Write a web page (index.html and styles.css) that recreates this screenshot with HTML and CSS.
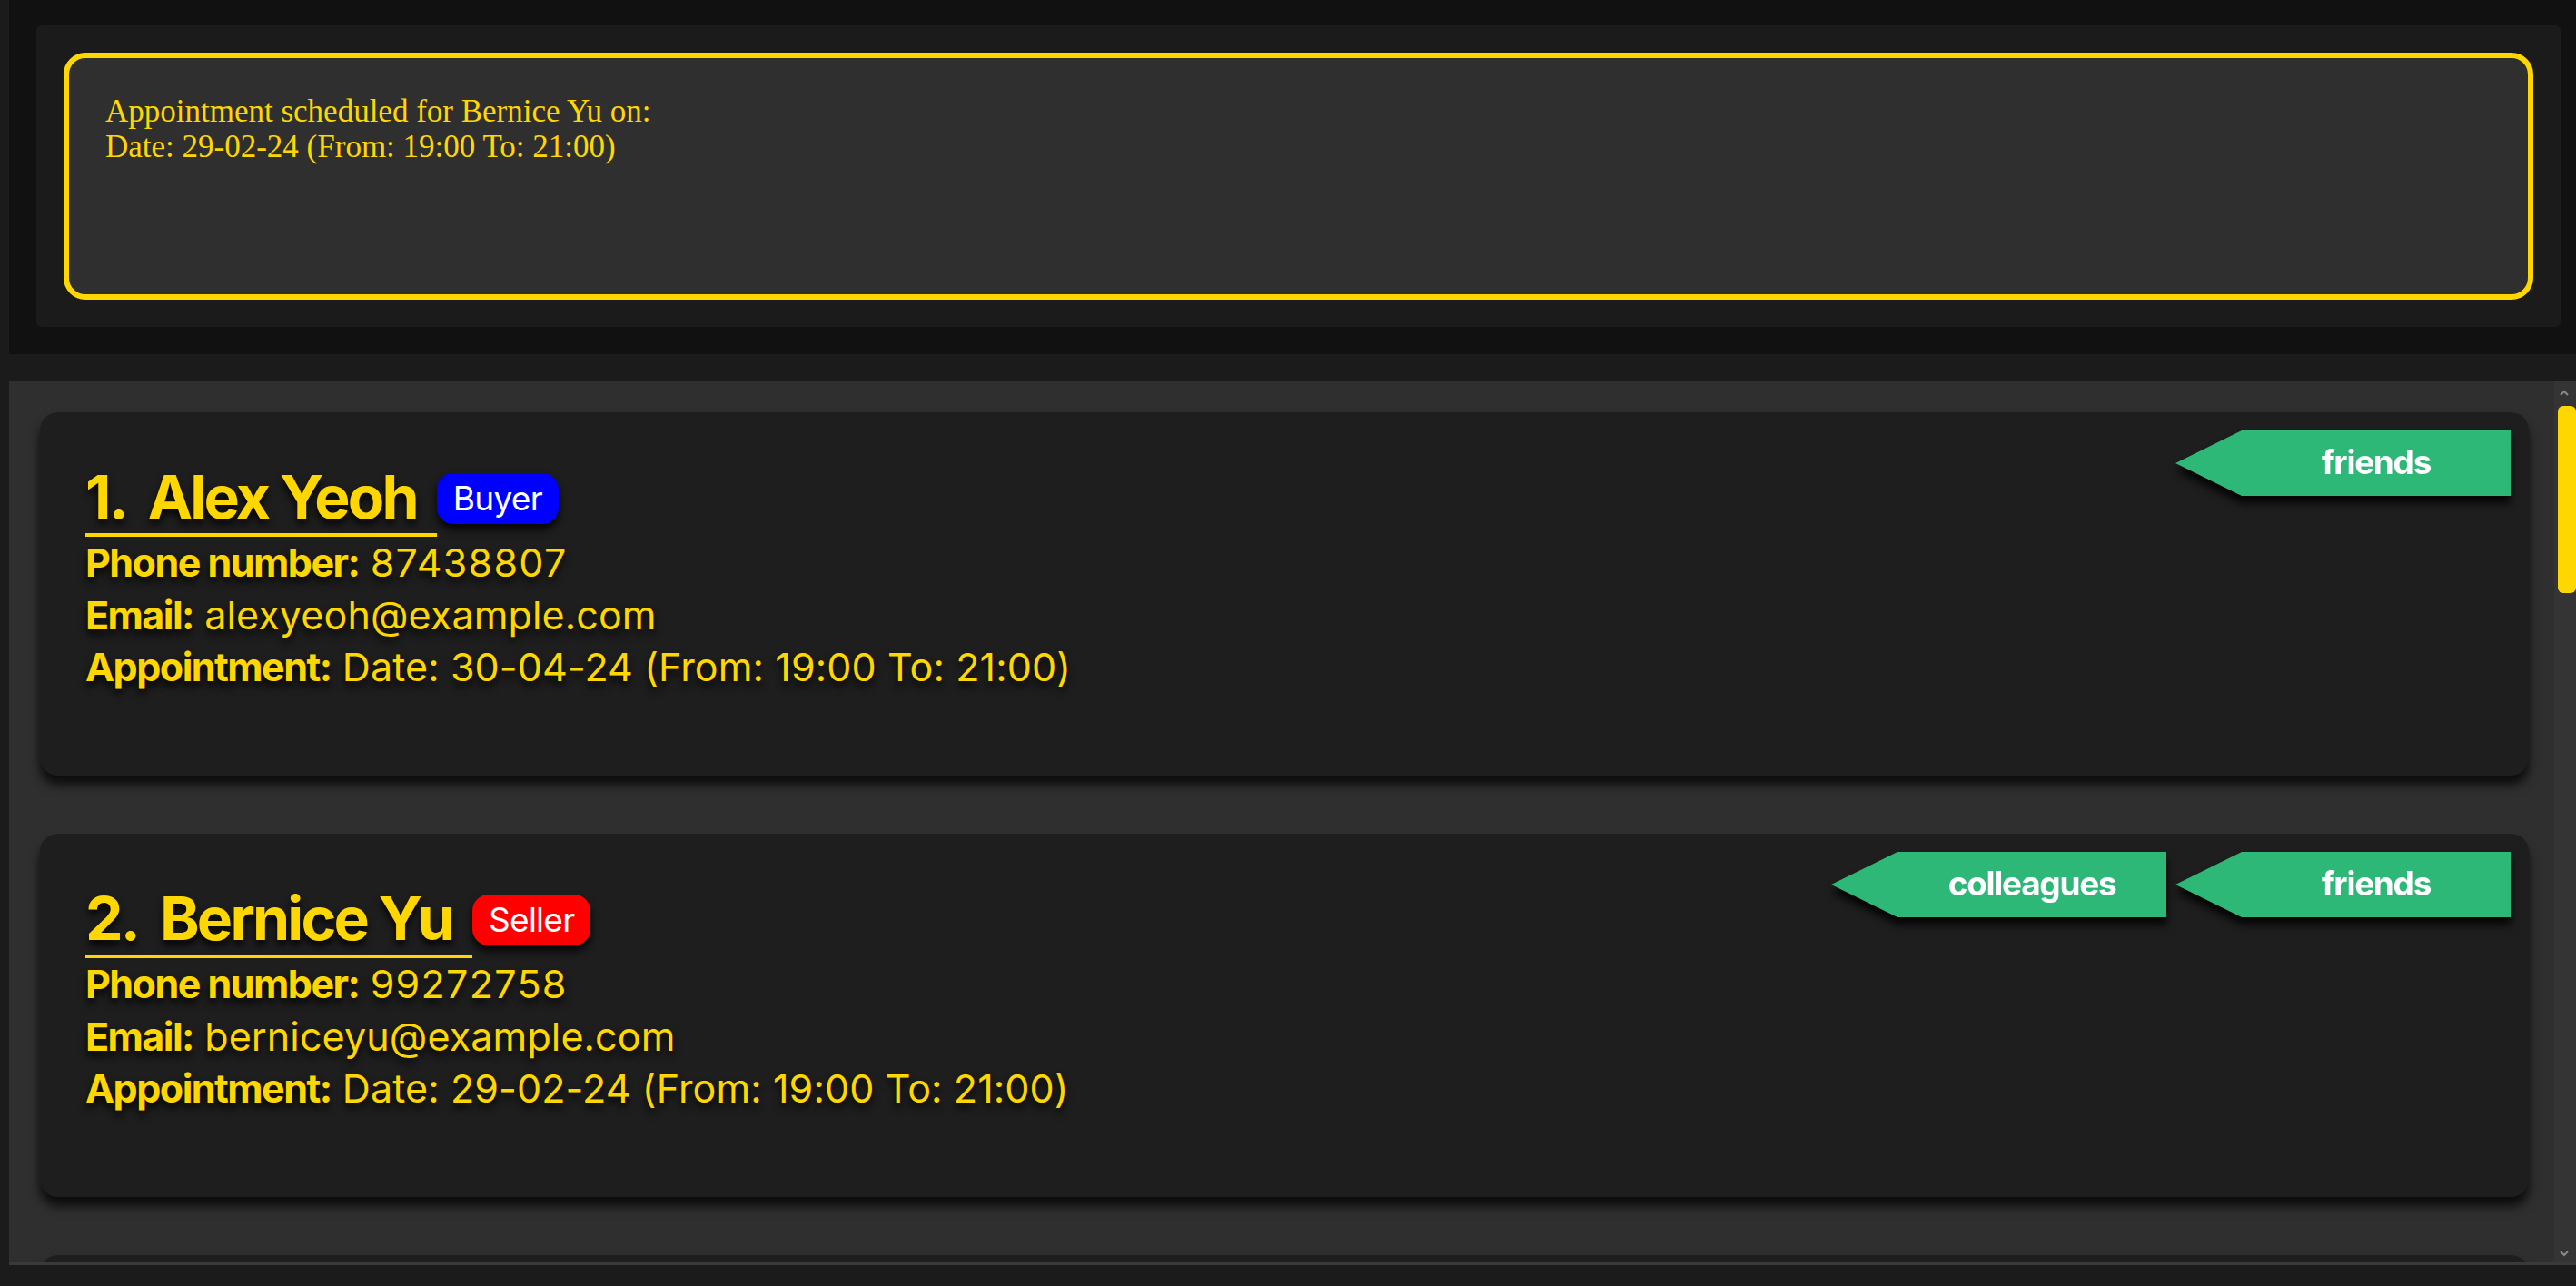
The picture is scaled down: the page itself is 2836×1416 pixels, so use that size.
FILE: index.html
```html
<!DOCTYPE html>
<html lang="en">
<head>
<meta charset="utf-8">
<title>Address Book</title>
<link rel="stylesheet" href="styles.css">
</head>
<body>
<div class="app">
  <section class="result">
    <div class="result-panel">
      <div class="result-box">Appointment scheduled for Bernice Yu on:<br>Date: 29-02-24 (From: 19:00 To: 21:00)</div>
    </div>
  </section>

  <section class="list">
    <div class="cards">
      <article class="card">
        <div class="card-body">
          <div class="title-row">
            <h2 class="name"><span class="idx">1.</span> Alex Yeoh</h2>
            <span class="badge buyer">Buyer</span>
          </div>
          <p class="line"><b>Phone number:</b> <span class="num">87438807</span></p>
          <p class="line"><b>Email:</b> alexyeoh@example.com</p>
          <p class="line"><b>Appointment:</b> Date: 30-04-24 (From: 19:00 To: 21:00)</p>
        </div>
        <div class="tags">
          <div class="tag-wrap"><span class="tag">friends</span></div>
        </div>
      </article>

      <article class="card">
        <div class="card-body">
          <div class="title-row">
            <h2 class="name"><span class="idx">2.</span> Bernice Yu</h2>
            <span class="badge seller">Seller</span>
          </div>
          <p class="line"><b>Phone number:</b> <span class="num">99272758</span></p>
          <p class="line"><b>Email:</b> berniceyu@example.com</p>
          <p class="line"><b>Appointment:</b> Date: 29-02-24 (From: 19:00 To: 21:00)</p>
        </div>
        <div class="tags">
          <div class="tag-wrap"><span class="tag">colleagues</span></div>
          <div class="tag-wrap"><span class="tag">friends</span></div>
        </div>
      </article>

      <article class="card card-peek"></article>
    </div>
    <div class="scrollbar">
      <svg class="arrow up" width="10" height="8" viewBox="0 0 10 8"><path d="M1 6 L5 2 L9 6" fill="none" stroke="#8a8a8a" stroke-width="2"/></svg>
      <div class="thumb"></div>
      <svg class="arrow down" width="10" height="8" viewBox="0 0 10 8"><path d="M1 2 L5 6 L9 2" fill="none" stroke="#8a8a8a" stroke-width="2"/></svg>
    </div>
  </section>
</div>
</body>
</html>
```

FILE: styles.css
```css
html, body {
  margin: 0;
  padding: 0;
}

body {
  width: 2836px;
  height: 1416px;
  overflow: hidden;
  background: #1b1b1b;
  font-family: Inter, "Noto Sans", "Liberation Sans", sans-serif;
}

.app {
  padding-left: 10px;
}

/* ---------- result display ---------- */
.result {
  box-sizing: border-box;
  height: 390px;
  background: #111111;
  padding: 28px 17px 30px 30px;
}

.result-panel {
  box-sizing: border-box;
  height: 332px;
  background: #1b1b1b;
  border-radius: 6px;
  padding: 30px;
}

.result-box {
  box-sizing: border-box;
  height: 272px;
  border: 6px solid #ffd700;
  border-radius: 24px;
  background: #2f2f2f;
  padding: 39px 40px;
  font-family: "Liberation Serif", "DejaVu Serif", serif;
  font-size: 35px;
  line-height: 39px;
  color: #ffd700;
}

/* ---------- person list ---------- */
.list {
  margin-top: 30px;
  height: 970px;
  display: flex;
  background: #2f2f2f;
  border-bottom: 3px solid #3a3a3a;
  overflow: hidden;
}

.cards {
  flex: 1;
  min-width: 0;
  padding: 34px 28px 0 34px;
  display: flex;
  flex-direction: column;
  gap: 64px;
}

.card {
  box-sizing: border-box;
  flex: 0 0 400px;
  height: 400px;
  background: #1e1e1e;
  border-radius: 20px;
  box-shadow: 0 10px 12px rgba(0, 0, 0, 0.75);
  display: flex;
  justify-content: space-between;
  align-items: flex-start;
  padding: 20px 20px 0 50px;
}

.card-body {
  margin-top: 33px;
  color: #ffd700;
  text-shadow: 0 6px 9px rgba(0, 0, 0, 0.85);
}

.title-row {
  display: flex;
  align-items: center;
}

.name {
  margin: 0;
  font-size: 66px;
  font-weight: 700;
  line-height: normal;
  letter-spacing: -0.042em;
  border-bottom: 4px solid #ffd700;
  padding-right: 22px;
  white-space: nowrap;
}

.idx {
  margin-right: 11px;
}

.badge {
  box-sizing: border-box;
  height: 56px;
  line-height: 56px;
  padding: 0 18px;
  border-radius: 18px;
  font-size: 37px;
  font-weight: 400;
  color: #ffffff;
  text-shadow: none;
  letter-spacing: -0.02em;
  box-shadow: 0 6px 10px rgba(0, 0, 0, 0.85);
}

.buyer {
  background: #0000ff;
}

.seller {
  background: #ff0000;
}

.line {
  margin: 0;
  font-size: 43px;
  line-height: 57.5px;
  font-weight: 400;
  letter-spacing: 0.003em;
  white-space: nowrap;
}

.line .num {
  letter-spacing: 0.03em;
}

.line b {
  font-weight: 700;
  letter-spacing: -0.035em;
}

/* ---------- tags ---------- */
.tags {
  display: flex;
  gap: 10px;
}

.tag-wrap {
  filter: drop-shadow(0 8px 5px rgba(0, 0, 0, 0.85));
}

.tag {
  box-sizing: border-box;
  display: flex;
  align-items: center;
  justify-content: center;
  width: 369px;
  height: 72px;
  padding-left: 73px;
  padding-bottom: 4px;
  background: #2eb877;
  color: #ffffff;
  font-size: 37px;
  font-weight: 700;
  letter-spacing: -0.035em;
  clip-path: polygon(0 50%, 73px 0, 100% 0, 100% 100%, 73px 100%);
}

/* ---------- scrollbar ---------- */
.scrollbar {
  flex: 0 0 18px;
  background: #343434;
  display: flex;
  flex-direction: column;
  align-items: flex-start;
}

.arrow {
  display: block;
  margin-left: 6px;
}

.arrow.up {
  margin-top: 9px;
}

.thumb {
  margin-top: 10px;
  margin-left: 4px;
  width: 20px;
  height: 206px;
  background: #ffd700;
  border-radius: 6px;
}

.arrow.down {
  margin-top: auto;
  margin-bottom: 6px;
}
```
